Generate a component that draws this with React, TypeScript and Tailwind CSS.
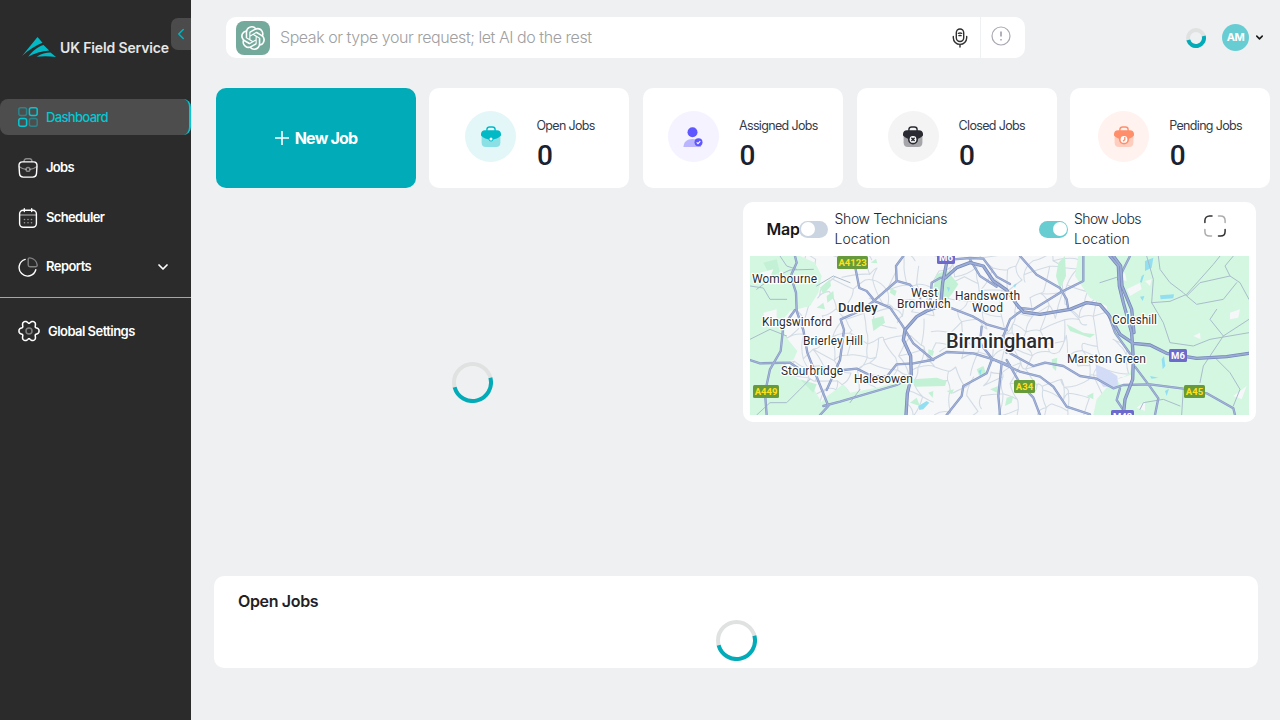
import React from "react";
import { ChevronDown, ChevronLeft } from "lucide-react";
import { SiOpenai } from "react-icons/si";

function Spinner({ size, stroke }: { size: number; stroke: number }) {
  const r = (size - stroke) / 2;
  const c = size / 2;
  const at = (deg: number) => {
    const a = (deg * Math.PI) / 180;
    return `${c + r * Math.cos(a)} ${c + r * Math.sin(a)}`;
  };
  return (
    <svg width={size} height={size} className="block shrink-0">
      <circle cx={c} cy={c} r={r} fill="none" stroke="#e0e1e1" strokeWidth={stroke} />
      <path d={`M${at(-15)}A${r} ${r} 0 0 1 ${at(165)}`} fill="none" stroke="#02abb8" strokeWidth={stroke} />
    </svg>
  );
}

function Logo() {
  return (
    <svg width="34" height="20" viewBox="0 0 34 20" fill="#02b9c6" className="block shrink-0">
      <path d="M0 18.900L15.500 0L20.500 5.800C14 8.500 7 12.500 0 18.900Z" />
      <path d="M6.300 19.700C10 14.500 15 10 21.500 8L27.200 13.500C19 14.500 13 16 6.300 19.700Z" />
      <path d="M14.700 19.700C19 17 24 15.700 28.500 15.600L34 20C28 19 21 18.800 14.700 19.700Z" />
    </svg>
  );
}

function DashIcon() {
  return (
    <svg width="20" height="20" viewBox="0 0 20 20" fill="none" stroke="#04c7d4" strokeWidth="1.500">
      <rect x=".8" y=".8" width="7.800" height="7.800" rx="2" opacity=".45" />
      <rect x="11.400" y=".8" width="7.800" height="7.800" rx="2" />
      <rect x=".8" y="11.400" width="7.800" height="7.800" rx="2" />
      <rect x="11.400" y="11.400" width="7.800" height="7.800" rx="2" opacity=".45" />
    </svg>
  );
}

function JobsIcon() {
  return (
    <svg width="20" height="20" viewBox="0 0 20 20" fill="none" stroke="#fff" strokeWidth="1.400" strokeLinecap="round">
      <path d="M6 3.600C6 1.600 7 .8 8.500 .8h3C13 .8 14 1.600 14 3.600" opacity=".45" />
      <path d="M4.500 3.900h11c2.500 0 3.700 1.500 3.500 4l-.5 7.500c-.2 2.400-1.200 3.700-3.700 3.700H5.200c-2.500 0-3.500-1.300-3.700-3.700L1 7.900c-.2-2.500 1-4 3.500-4Z" />
      <path d="M1.300 8.800c2 1.400 4.200 2.300 6.600 2.600M18.700 8.800c-2 1.400-4.200 2.300-6.600 2.600" opacity=".45" />
      <circle cx="10" cy="11.400" r="1.900" opacity=".45" />
    </svg>
  );
}

function CalendarIcon() {
  return (
    <svg width="20" height="20" viewBox="0 0 20 20" fill="none" stroke="#fff" strokeWidth="1.400" strokeLinecap="round">
      <path d="M6.300 .7v2.800M13.700 .7v2.800" />
      <rect x="1.600" y="2.200" width="16.800" height="17" rx="3.600" />
      <path d="M2 7h16" opacity=".45" />
      <g opacity=".5" strokeWidth="1.600">
        <path d="M6.500 11.500h.01M10 11.500h.01M13.500 11.500h.01M6.500 14.800h.01M10 14.800h.01M13.500 14.800h.01" />
      </g>
    </svg>
  );
}

function ReportIcon() {
  return (
    <svg width="20" height="20" viewBox="0 0 20 20" fill="none" stroke="#fff" strokeWidth="1.400" strokeLinecap="round">
      <path d="M10.200 8V2.500c0-1 .6-1.700 1.600-1.600 3.900.4 7 3.400 7.400 7.100.1 1-.6 1.700-1.600 1.700h-5.700c-1.100 0-1.700-.6-1.700-1.700Z" opacity=".4" />
      <path d="M7.200 2.400A8.500 8.500 0 1 0 17.800 12.800" />
    </svg>
  );
}

function gearOutline(): string {
  const pts: string[] = [];
  for (let i = 0; i < 120; i++) {
    const a = (i / 120) * Math.PI * 2;
    const r = 8.9 + 1.4 * Math.cos(6 * a) - 0.25 * Math.cos(12 * a);
    pts.push(`${(11 + r * Math.cos(a)).toFixed(2)} ${(11 + r * 1.05 * Math.sin(a)).toFixed(2)}`);
  }
  return `M${pts.join("L")}Z`;
}

function GearIcon() {
  return (
    <svg width="22" height="22" viewBox="0 0 22 22" fill="none" stroke="#fff" strokeWidth="1.500" strokeLinejoin="round" className="shrink-0">
      <path d={gearOutline()} />
      <circle cx="11" cy="11" r="3" opacity=".4" />
    </svg>
  );
}

function NavItem({ icon, label, spacing }: { icon: React.ReactNode; label: string; spacing: string }) {
  return (
    <div className="flex h-9 items-center pl-[18px]">
      {icon}
      <span className={`ml-2 text-[13px] font-semibold text-white ${spacing}`}>{label}</span>
    </div>
  );
}

function Sidebar() {
  return (
    <aside className="flex h-full w-[191px] shrink-0 flex-col bg-[#2a2b2a]">
      <div className="flex h-[99px]">
        <div className="flex w-[171px] shrink-0 items-start pl-[22px] pt-[37px]">
          <Logo />
          <span className="ml-[4px] whitespace-nowrap pt-px text-[14px] font-semibold leading-[20px] tracking-[-0.15px] text-[#e6e6e6]">
            UK Field Service
          </span>
        </div>
        <button className="mt-[18px] flex h-8 w-[20px] items-center justify-center rounded-l-[7px] bg-[#4b4b4b]">
          <ChevronLeft size={18} strokeWidth={2} className="shrink-0 text-[#02b4c1]" />
        </button>
      </div>
      <div className="flex h-9 items-center rounded-[8px] border-r-2 border-[#04c7d4] bg-[#4d4d4d] pl-[18px]">
        <DashIcon />
        <span className="ml-2 pt-px text-[13px] font-medium tracking-[-0.66px] text-[#04c7d4]">Dashboard</span>
      </div>
      <div className="mt-[14.500px] flex flex-col gap-[14px]">
        <NavItem icon={<JobsIcon />} label="Jobs" spacing="tracking-[-0.7px] pt-px" />
        <NavItem icon={<CalendarIcon />} label="Scheduler" spacing="tracking-[-0.64px] pt-px" />
      </div>
      <div className="mt-[13.500px] flex h-9 items-center justify-between pr-[20px]">
        <NavItem icon={<ReportIcon />} label="Reports" spacing="tracking-[-0.55px]" />
        <ChevronDown size={16} strokeWidth={2.600} className="text-white" />
      </div>
      <div className="mt-[12px] h-px bg-[#a6a6a6]" />
      <div className="mt-[15px]">
        <NavItem icon={<GearIcon />} label="Global Settings" spacing="tracking-[-0.55px] pt-px" />
      </div>
    </aside>
  );
}

function Header() {
  return (
    <header className="flex h-[41px] items-center">
      <div className="ml-[35px] flex h-[41px] w-[799px] items-center rounded-[10px] bg-white">
        <div className="ml-[10px] flex size-[34px] items-center justify-center rounded-[8px] bg-[#74aa9c]">
          <SiOpenai size={24} color="#fff" />
        </div>
        <span className="ml-[10px] flex-1 pb-px text-[16px] font-light tracking-[-0.45px] text-[#a0a0a0]">
          Speak or type your request; let AI do the rest
        </span>
        <svg width="16" height="20" viewBox="0 0 16 20" fill="none" stroke="#2f2f2f" strokeWidth="1.400" strokeLinecap="round">
          <rect x="4.300" y="1" width="7.400" height="12.500" rx="3.700" />
          <path d="M1.300 8.500v1.200a6.700 6.700 0 0 0 13.400 0V8.500M8 16.500V19M6.300 5.300c1.200-.4 2.300-.4 3.400 0M6.900 7.600c.8-.2 1.500-.2 2.200 0" />
        </svg>
        <div className="ml-[12px] flex h-full w-[45px] items-center border-l border-[#eef0f2] pl-[10px]">
          <svg width="20" height="20" viewBox="0 0 20 20" fill="none" stroke="#a9a9b3" className="mb-[4px]">
            <circle cx="10" cy="10" r="9" strokeWidth="1.200" />
            <path d="M10 5.600v5" strokeWidth="1.800" />
            <path d="M10 13v1.600" strokeWidth="1.600" />
          </svg>
        </div>
      </div>
      <div className="ml-[161px] flex items-center">
        <Spinner size={20} stroke={4} />
        <div className="ml-4 flex size-[27px] items-center justify-center rounded-full bg-[#67cdd3] text-[11px] font-bold tracking-[-0.5px] text-white">
          AM
        </div>
        <ChevronDown size={11} strokeWidth={3.400} className="ml-[5px] text-[#1a1a1a]" />
      </div>
    </header>
  );
}

function CaseIcon({ dark, light, children }: { dark: string; light: string; children: React.ReactNode }) {
  return (
    <svg width="20" height="22" viewBox="0 0 20 22">
      <path d="M.6 10h18.800v6.500c0 3-1.500 4.500-4.500 4.500H5.100c-3 0-4.500-1.500-4.500-4.500Z" fill={light} />
      <path d="M5.900 5V3.600C5.900 1.800 7 1 8.600 1h2.800c1.600 0 2.700.8 2.700 2.600V5" fill="none" stroke={dark} strokeWidth="1.400" />
      <path d="M4 4.300h12c2.400 0 4 1.500 4 3.700v1.500c-2.500 2.600-5.500 4-10 4.300-4.500-.3-7.500-1.700-10-4.300V8c0-2.200 1.600-3.700 4-3.700Z" fill={dark} />
      {children}
    </svg>
  );
}

const stats = [
  {
    label: "Open Jobs",
    circle: "bg-[#e3f7f9]",
    pad: "pl-[36px]",
    icon: (
      <CaseIcon dark="#02b9c6" light="#8ae0e5">
        <circle cx="10" cy="13.200" r="2.200" fill="#02b9c6" />
        <circle cx="10" cy="13" r="1.500" fill="#fff" />
      </CaseIcon>
    ),
  },
  {
    label: "Assigned Jobs",
    circle: "bg-[#f4f3ff]",
    pad: "pl-[25px]",
    icon: (
      <svg width="20" height="22" viewBox="0 0 20 22">
        <circle cx="9.500" cy="6.200" r="5" fill="#5f57ff" />
        <path d="M.5 21c0-5 3.500-8 9-8s8.500 3 8.500 8Z" fill="#b9b5ff" />
        <circle cx="15.500" cy="16.200" r="4" fill="#5f57ff" />
        <path d="m13.700 16.300 1.300 1.300 2.300-2.500" fill="none" stroke="#fff" strokeWidth="1.200" />
      </svg>
    ),
  },
  {
    label: "Closed Jobs",
    circle: "bg-[#f4f4f4]",
    pad: "pl-[31px]",
    icon: (
      <CaseIcon dark="#292a32" light="#a5a5aa">
        <circle cx="10" cy="13.400" r="5" fill="#292a32" />
        <circle cx="10" cy="13.400" r="3.400" fill="#fff" />
        <path d="m8.400 11.800 3.200 3.200m0-3.200-3.200 3.200" stroke="#292a32" strokeWidth="1.500" />
      </CaseIcon>
    ),
  },
  {
    label: "Pending Jobs",
    circle: "bg-[#fff2ef]",
    pad: "pl-[28px]",
    icon: (
      <CaseIcon dark="#ff8e6b" light="#ffcdbd">
        <circle cx="10" cy="13.400" r="5" fill="#ff8e6b" />
        <circle cx="10" cy="13.400" r="3.400" fill="#fff" />
        <path d="M10.800 11v2.600L9 15.200" fill="none" stroke="#ff8e6b" strokeWidth="1.300" />
      </CaseIcon>
    ),
  },
];

function StatRow() {
  return (
    <div className="ml-[25px] mt-[30px] flex">
      <button className="mr-[13.400px] flex h-[100px] w-[200px] shrink-0 items-center justify-center rounded-[10px] bg-[#02abb8] text-white">
        <svg width="14" height="14" viewBox="0 0 14 14" stroke="#fff" strokeWidth="1.600">
          <path d="M7 0v14M0 7h14" />
        </svg>
        <span className="ml-[6px] text-[16px] font-bold tracking-[-0.8px]">New Job</span>
      </button>
      <div className="flex gap-[13.600px]">
        {stats.map((s) => (
          <div key={s.label} className={`flex h-[100px] w-[200px] shrink-0 rounded-[10px] bg-white ${s.pad}`}>
            <div className={`mt-[23px] flex size-[51px] shrink-0 items-center justify-center rounded-full ${s.circle}`}>
              {s.icon}
            </div>
            <div className="ml-[20px] mt-[28px]">
              <div className="whitespace-nowrap text-[12.500px] leading-[19px] tracking-[-0.66px] text-[#353b48]">{s.label}</div>
              <div className="mt-[4px] pl-[0.500px] font-['Roboto'] text-[28px] font-medium leading-[34px] text-[#1a2130]">0</div>
            </div>
          </div>
        ))}
      </div>
    </div>
  );
}

// Major roads, in thirds of a pixel.
const majorRoads = [
  "M135 0L140 20L122 60L138 110L140 165L160 222L172 290L205 375L235 450L210 477",
  "M135 162L100 210L92 285L60 340L45 410L50 477",
  "M0 312L30 322L120 320L165 350",
  "M280 342L320 338L365 360L410 362L440 325L490 322L545 312L590 288L670 292L730 310L780 328",
  "M315 30L328 96L350 105L375 136L420 155L455 205L490 262L550 312",
  "M370 136L440 75L438 30L460 0",
  "M440 75L480 86L510 126",
  "M220 450L270 437L440 387L485 362",
  "M230 402L270 312L282 222L272 190L330 165L370 136",
  "M600 155L670 182L710 205L770 222M695 212L690 262L730 312",
  "M725 312L710 352L640 390L635 420L590 477",
  "M755 322L745 420L750 477",
  "M820 160L780 190L760 240L770 290",
  "M810 0L860 56L930 96L950 130L955 160",
  "M1000 0L1000 75L930 110L850 160L805 155",
  "M780 292L850 330L885 320L940 330L990 360L1040 368L1090 397L1120 387L1200 385L1300 398L1370 412L1450 457L1455 477",
  "M730 310L810 347L870 362L910 392L950 452L1020 475",
  "M770 312L810 382L850 425L870 477",
  "M1155 332L1200 392L1225 427L1215 477",
  "M1110 397L1100 432L1125 470",
  "M1140 0L1105 70M1075 175L1095 230L1145 300",
  "M540 160L545 80L570 66L590 64",
  "M660 10L690 60L740 92",
  "M610 10L660 6L700 8L740 62L780 84",
];
const motorways = [
  "M590 20L578 80L572 150L530 165L500 182L465 222L460 252L482 300L484 362L472 412L468 477",
  "M585 66L620 35L660 20L700 30L730 75L770 102L800 145L820 168L870 175L960 160L1010 140L1050 146L1075 175L1090 200L1110 235L1150 262L1200 267L1250 292L1340 307L1430 302L1497 292",
  "M1080 0L1105 30L1108 90L1120 140L1145 230L1150 310L1148 370L1125 430L1120 477",
  "M1090 0L1112 30L1116 90L1145 160L1152 230",
];
const ruralRoads = [
  "M0 90L40 96L60 130L110 130M20 100L60 70L120 42L190 40M90 0L110 30L140 40M200 90L250 60L300 80",
  "M1225 0L1230 40L1260 80L1300 110L1310 120L1350 80L1440 60L1470 80L1497 130M1205 140L1260 136L1310 115L1390 25L1410 0M1205 140L1210 70L1190 0M1440 60L1425 30L1450 0M1310 120L1340 145L1420 130L1460 80",
  "M1205 140L1240 200L1260 260L1330 270L1380 250L1497 230M1350 380L1360 330L1400 270L1420 240L1380 190L1400 160M1420 240L1497 190M1400 310L1440 350L1470 400L1450 450M1300 398L1295 477M1170 460L1180 440L1240 430L1290 450",
  "M20 477L60 440L110 440L150 400L180 370M1050 80L1100 64M300 440L330 400M110 240L60 220L0 250",
];

function minorRoads(): string {
  let seed = 11;
  const rnd = () => {
    seed = (seed * 16807) % 2147483647;
    return seed / 2147483647;
  };
  const cols = 36;
  const rows = 13;
  const step = 42;
  const pts: number[][][] = [];
  for (let r = 0; r < rows; r++) {
    pts.push([]);
    for (let c = 0; c < cols; c++) {
      pts[r].push([Math.round(c * step + (rnd() - 0.5) * 46), Math.round(r * step + (rnd() - 0.5) * 46)]);
    }
  }
  let d = "";
  const join = (a: number[], b: number[]) => {
    const mx = Math.round((a[0] + b[0]) / 2 + (rnd() - 0.5) * 24);
    const my = Math.round((a[1] + b[1]) / 2 + (rnd() - 0.5) * 24);
    d += `M${a[0]} ${a[1]}Q${mx} ${my} ${b[0]} ${b[1]}`;
  };
  for (let r = 0; r < rows; r++) {
    for (let c = 0; c < cols; c++) {
      if (c + 1 < cols && rnd() > 0.3) join(pts[r][c], pts[r][c + 1]);
      if (r + 1 < rows && rnd() > 0.3) join(pts[r][c], pts[r + 1][c]);
    }
  }
  return d;
}

const places = [
  { t: "Wombourne", x: 2, y: 27, w: 65, s: 12 },
  { t: "Dudley", x: 88, y: 55.5, w: 39.5, s: 13, b: 500 },
  { t: "West", x: 161, y: 40.5, w: 27, s: 12 },
  { t: "Bromwich", x: 147, y: 52, w: 53.5, s: 12 },
  { t: "Handsworth", x: 205, y: 44, w: 65, s: 12 },
  { t: "Wood", x: 222, y: 56, w: 31, s: 12 },
  { t: "Coleshill", x: 362, y: 68, w: 45, s: 12 },
  { t: "Kingswinford", x: 12, y: 70, w: 70, s: 12 },
  { t: "Brierley Hill", x: 53, y: 89, w: 60, s: 12 },
  { t: "Birmingham", x: 196, y: 92, w: 108.5, s: 20, b: 500 },
  { t: "Marston Green", x: 317, y: 107, w: 79, s: 12 },
  { t: "Stourbridge", x: 31, y: 119, w: 62, s: 12 },
  { t: "Halesowen", x: 104, y: 127, w: 59, s: 12 },
];
const shields = [
  { t: "A4123", x: 87, y: 0, w: 31 },
  { t: "A449", x: 3, y: 129, w: 26 },
  { t: "A34", x: 264, y: 124, w: 21 },
  { t: "A45", x: 434, y: 129, w: 21 },
  { t: "M6", x: 187, y: -5, w: 18, m: true },
  { t: "M6", x: 419, y: 93, w: 18, m: true },
  { t: "M42", x: 361, y: 154, w: 23, m: true },
];

function AreaMap() {
  return (
    <svg width="499" height="159" viewBox="0 0 499 159" className="block overflow-hidden">
      <rect width="499" height="159" fill="#f6f7f8" />
      <g transform="scale(.33333)" fill="none" strokeLinejoin="round" strokeLinecap="round">
        <path d={minorRoads()} stroke="#d2dbe5" strokeWidth="3.200" />
        <g fill="#d3f7e1">
          <path d="M0 0H150L195 20L215 60L205 110L180 150L120 165L100 190L105 240L142 285L130 312L90 320L130 360L190 395L215 440L200 477H0Z" />
          <path d="M180 477L225 425L280 385L300 410L380 395L470 370L470 477Z" />
          <path d="M985 0L975 60L1020 125L1070 150L1075 180L1095 240L1150 300L1140 350L1070 395L1040 430L1030 477H1497V0Z" />
        </g>
        <g fill="#c3f1d5">
          <path d="M560 55L590 42L625 85L605 115L575 150L550 95Z" />
          <path d="M210 95L240 70L243 90L220 115ZM362 20L378 8L382 22ZM230 120L250 105L252 125L232 140ZM365 190L400 180L405 200L370 225ZM422 95L440 105L435 120L420 110Z" />
          <path d="M490 370L560 365L590 375L585 390L495 392ZM535 280L552 285L548 300L535 295ZM590 405L612 400L605 415ZM680 340L700 330L708 350L690 365ZM535 410L550 405L548 425Z" />
          <path d="M925 20L945 0L948 60L930 100L918 60ZM950 205L1000 230L1035 235L1020 245L960 225ZM770 425L790 420L785 440L765 450ZM905 310L922 305L918 345L908 335ZM720 400L745 390L750 415ZM1010 420L1030 410L1030 430ZM480 440L500 425L510 450Z" />
          <path d="M40 20L80 10L90 50L60 60ZM200 155L220 140L225 160Z M150 370L200 385L190 410Z" />
        </g>
        <g fill="#f6f7f8">
          <path d="M1130 100L1170 80L1175 100L1140 120ZM1105 70L1125 50L1130 75ZM1440 170L1470 160L1465 185L1440 190ZM1100 370L1150 355L1145 385L1110 385ZM1160 455L1185 435L1185 465ZM1450 420L1490 390L1475 430ZM1185 75L1205 70L1200 90ZM40 170L80 160L80 185L45 195ZM1330 240L1350 230L1352 250ZM30 50L70 40L60 65Z" />
        </g>
        <path d="M1037 325L1070 340L1102 360L1104 395L1060 392L1040 365Z" fill="#d3dcf6" />
        <g fill="#92dff2">
          <path d="M1185 15L1210 5L1205 35L1185 45ZM1230 118L1272 115L1270 127L1232 130ZM1175 60L1183 55L1175 80L1170 78ZM505 450L530 435L538 440L520 460L508 462ZM1235 310L1242 300L1246 330L1238 340ZM1245 405L1257 398L1250 420ZM1200 360L1225 365L1205 368ZM1170 122L1183 120L1178 135ZM685 345L695 340L692 358ZM790 88L800 82L795 95ZM590 92L600 95L596 108Z" />
        </g>
        {ruralRoads.map((d) => (
          <path key={d} d={d} stroke="#a9bccb" strokeWidth="3" />
        ))}
        {majorRoads.map((d) => (
          <path key={d} d={d} stroke="#8697c3" strokeWidth="7" />
        ))}
        {majorRoads.map((d) => (
          <path key={d} d={d} stroke="#a2b2d8" strokeWidth="3.500" />
        ))}
        {motorways.map((d) => (
          <path key={d} d={d} stroke="#7688b8" strokeWidth="10" />
        ))}
        {motorways.map((d) => (
          <path key={d} d={d} stroke="#9bacd6" strokeWidth="5.500" />
        ))}
      </g>
      {places.map((p) => (
        <text
          key={p.t}
          x={p.x}
          y={p.y}
          textLength={p.w}
          fontSize={p.s}
          fontWeight={p.b || 400}
          fontFamily="Roboto, sans-serif"
          fill="#2b2d31"
          stroke="#fff"
          strokeWidth="2.500"
          strokeLinejoin="round"
          paintOrder="stroke"
        >
          {p.t}
        </text>
      ))}
      {shields.map((s) => (
        <g key={s.t + s.x}>
          <rect x={s.x} y={s.y} width={s.w} height="13" rx="1.500" fill={s.m ? "#6c6bcb" : "#669a3b"} />
          <text
            x={s.x + s.w / 2}
            y={s.y + 10}
            textAnchor="middle"
            fontSize="9.500"
            fontWeight="700"
            fontFamily="Roboto, sans-serif"
            fill={s.m ? "#fff" : "#ffe11a"}
          >
            {s.t}
          </text>
        </g>
      ))}
    </svg>
  );
}

function Toggle({ on }: { on?: boolean }) {
  return (
    <div className={`flex h-[17px] w-[29px] shrink-0 items-center rounded-full px-[1.500px] ${on ? "justify-end bg-[#67cdd0]" : "bg-[#cbd5e1]"}`}>
      <div className="size-[14px] rounded-full bg-white" />
    </div>
  );
}

function MapCard() {
  return (
    <section className="mr-[24px] h-[220px] w-[513px] shrink-0 rounded-[10px] bg-white px-[7px]">
      <div className="flex h-[54px] items-center pl-[16.500px]">
        <h2 className="w-[32.500px] shrink-0 text-[16px] font-semibold tracking-[-0.2px] text-[#16181d]">Map</h2>
        <Toggle />
        <p className="ml-[6.500px] w-[150px] text-[14px] font-light leading-5 text-[#22252c]">
          <span className="tracking-[-0.35px]">Show Technicians</span>
          <br />
          Location
        </p>
        <div className="ml-[54.500px]">
          <Toggle on />
        </div>
        <p className="ml-[6px] w-[100px] text-[14px] font-light leading-5 text-[#22252c]">
          <span className="tracking-[-0.6px]">Show Jobs</span>
          <br />
          Location
        </p>
        <svg width="22" height="22" viewBox="0 0 22 22" fill="none" stroke="#2f3033" strokeWidth="1.500" strokeLinecap="round" className="mb-[6px] ml-[29.500px] shrink-0">
          <path d="M.9 7.500V5.500C.9 2.800 2.800 .9 5.500 .9h2.500M21.100 14.500v2c0 2.700-1.900 4.600-4.600 4.600H14.500" />
          <path d="M14.500 .9h2c2.700 0 4.600 1.900 4.600 4.600v2M.9 14.500v2c0 2.700 1.900 4.600 4.600 4.600h2" opacity=".4" />
        </svg>
      </div>
      <AreaMap />
    </section>
  );
}

export default function App() {
  return (
    <div className="flex h-[720px] w-[1280px] overflow-hidden bg-[#eff0f2] font-['Inter',sans-serif]">
      <Sidebar />
      <main className="flex min-w-0 flex-1 flex-col pt-[17px]">
        <Header />
        <StatRow />
        <div className="mt-[14px] flex h-[374px] justify-between">
          <div className="flex h-[361px] w-[552px] items-center justify-center pl-[11px]">
            <Spinner size={41} stroke={4} />
          </div>
          <MapCard />
        </div>
        <section className="ml-[23px] h-[92px] w-[1044px] rounded-[10px] bg-white pt-[13px]">
          <h2 className="pl-6 text-[16px] font-semibold leading-6 tracking-[-0.350px] text-[#1f2126]">Open Jobs</h2>
          <div className="mt-[7px] flex justify-center pl-px">
            <Spinner size={41} stroke={4} />
          </div>
        </section>
      </main>
    </div>
  );
}
